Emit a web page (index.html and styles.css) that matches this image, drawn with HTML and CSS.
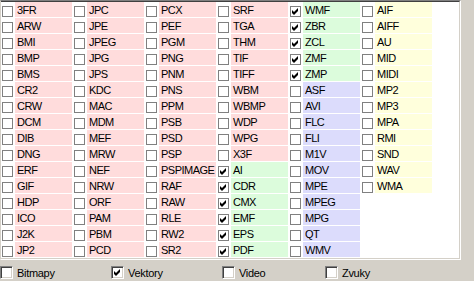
FILE: index.html
```html
<!DOCTYPE html>
<html lang="cs">
<head>
    <meta charset="UTF-8">
    <title>Typy souborů</title>
    <link rel="stylesheet" href="styles.css">
</head>
<body>
    <div class="list">
        <div class="list-inner">
            <div class="items">
                <div class="item pink"><span class="box"></span><span class="name">3FR</span></div>
                <div class="item pink"><span class="box"></span><span class="name">ARW</span></div>
                <div class="item pink"><span class="box"></span><span class="name">BMI</span></div>
                <div class="item pink"><span class="box"></span><span class="name">BMP</span></div>
                <div class="item pink"><span class="box"></span><span class="name">BMS</span></div>
                <div class="item pink"><span class="box"></span><span class="name">CR2</span></div>
                <div class="item pink"><span class="box"></span><span class="name">CRW</span></div>
                <div class="item pink"><span class="box"></span><span class="name">DCM</span></div>
                <div class="item pink"><span class="box"></span><span class="name">DIB</span></div>
                <div class="item pink"><span class="box"></span><span class="name">DNG</span></div>
                <div class="item pink"><span class="box"></span><span class="name">ERF</span></div>
                <div class="item pink"><span class="box"></span><span class="name">GIF</span></div>
                <div class="item pink"><span class="box"></span><span class="name">HDP</span></div>
                <div class="item pink"><span class="box"></span><span class="name">ICO</span></div>
                <div class="item pink"><span class="box"></span><span class="name">J2K</span></div>
                <div class="item pink"><span class="box"></span><span class="name">JP2</span></div>

                <div class="item pink"><span class="box"></span><span class="name">JPC</span></div>
                <div class="item pink"><span class="box"></span><span class="name">JPE</span></div>
                <div class="item pink"><span class="box"></span><span class="name">JPEG</span></div>
                <div class="item pink"><span class="box"></span><span class="name">JPG</span></div>
                <div class="item pink"><span class="box"></span><span class="name">JPS</span></div>
                <div class="item pink"><span class="box"></span><span class="name">KDC</span></div>
                <div class="item pink"><span class="box"></span><span class="name">MAC</span></div>
                <div class="item pink"><span class="box"></span><span class="name">MDM</span></div>
                <div class="item pink"><span class="box"></span><span class="name">MEF</span></div>
                <div class="item pink"><span class="box"></span><span class="name">MRW</span></div>
                <div class="item pink"><span class="box"></span><span class="name">NEF</span></div>
                <div class="item pink"><span class="box"></span><span class="name">NRW</span></div>
                <div class="item pink"><span class="box"></span><span class="name">ORF</span></div>
                <div class="item pink"><span class="box"></span><span class="name">PAM</span></div>
                <div class="item pink"><span class="box"></span><span class="name">PBM</span></div>
                <div class="item pink"><span class="box"></span><span class="name">PCD</span></div>

                <div class="item pink"><span class="box"></span><span class="name">PCX</span></div>
                <div class="item pink"><span class="box"></span><span class="name">PEF</span></div>
                <div class="item pink"><span class="box"></span><span class="name">PGM</span></div>
                <div class="item pink"><span class="box"></span><span class="name">PNG</span></div>
                <div class="item pink"><span class="box"></span><span class="name">PNM</span></div>
                <div class="item pink"><span class="box"></span><span class="name">PNS</span></div>
                <div class="item pink"><span class="box"></span><span class="name">PPM</span></div>
                <div class="item pink"><span class="box"></span><span class="name">PSB</span></div>
                <div class="item pink"><span class="box"></span><span class="name">PSD</span></div>
                <div class="item pink"><span class="box"></span><span class="name">PSP</span></div>
                <div class="item pink"><span class="box"></span><span class="name">PSPIMAGE</span></div>
                <div class="item pink"><span class="box"></span><span class="name">RAF</span></div>
                <div class="item pink"><span class="box"></span><span class="name">RAW</span></div>
                <div class="item pink"><span class="box"></span><span class="name">RLE</span></div>
                <div class="item pink"><span class="box"></span><span class="name">RW2</span></div>
                <div class="item pink"><span class="box"></span><span class="name">SR2</span></div>

                <div class="item pink"><span class="box"></span><span class="name">SRF</span></div>
                <div class="item pink"><span class="box"></span><span class="name">TGA</span></div>
                <div class="item pink"><span class="box"></span><span class="name">THM</span></div>
                <div class="item pink"><span class="box"></span><span class="name">TIF</span></div>
                <div class="item pink"><span class="box"></span><span class="name">TIFF</span></div>
                <div class="item pink"><span class="box"></span><span class="name">WBM</span></div>
                <div class="item pink"><span class="box"></span><span class="name">WBMP</span></div>
                <div class="item pink"><span class="box"></span><span class="name">WDP</span></div>
                <div class="item pink"><span class="box"></span><span class="name">WPG</span></div>
                <div class="item pink"><span class="box"></span><span class="name">X3F</span></div>
                <div class="item green"><span class="box"><svg class="tick" viewBox="0 0 7 7"><polygon points="0,2 2,4 6,0 6,3 2,7 0,5"/></svg></span><span class="name">AI</span></div>
                <div class="item green"><span class="box"><svg class="tick" viewBox="0 0 7 7"><polygon points="0,2 2,4 6,0 6,3 2,7 0,5"/></svg></span><span class="name">CDR</span></div>
                <div class="item green"><span class="box"><svg class="tick" viewBox="0 0 7 7"><polygon points="0,2 2,4 6,0 6,3 2,7 0,5"/></svg></span><span class="name">CMX</span></div>
                <div class="item green"><span class="box"><svg class="tick" viewBox="0 0 7 7"><polygon points="0,2 2,4 6,0 6,3 2,7 0,5"/></svg></span><span class="name">EMF</span></div>
                <div class="item green"><span class="box"><svg class="tick" viewBox="0 0 7 7"><polygon points="0,2 2,4 6,0 6,3 2,7 0,5"/></svg></span><span class="name">EPS</span></div>
                <div class="item green"><span class="box"><svg class="tick" viewBox="0 0 7 7"><polygon points="0,2 2,4 6,0 6,3 2,7 0,5"/></svg></span><span class="name">PDF</span></div>

                <div class="item green"><span class="box"><svg class="tick" viewBox="0 0 7 7"><polygon points="0,2 2,4 6,0 6,3 2,7 0,5"/></svg></span><span class="name">WMF</span></div>
                <div class="item green"><span class="box"><svg class="tick" viewBox="0 0 7 7"><polygon points="0,2 2,4 6,0 6,3 2,7 0,5"/></svg></span><span class="name">ZBR</span></div>
                <div class="item green"><span class="box"><svg class="tick" viewBox="0 0 7 7"><polygon points="0,2 2,4 6,0 6,3 2,7 0,5"/></svg></span><span class="name">ZCL</span></div>
                <div class="item green"><span class="box"><svg class="tick" viewBox="0 0 7 7"><polygon points="0,2 2,4 6,0 6,3 2,7 0,5"/></svg></span><span class="name">ZMF</span></div>
                <div class="item green"><span class="box"><svg class="tick" viewBox="0 0 7 7"><polygon points="0,2 2,4 6,0 6,3 2,7 0,5"/></svg></span><span class="name">ZMP</span></div>
                <div class="item blue"><span class="box"></span><span class="name">ASF</span></div>
                <div class="item blue"><span class="box"></span><span class="name">AVI</span></div>
                <div class="item blue"><span class="box"></span><span class="name">FLC</span></div>
                <div class="item blue"><span class="box"></span><span class="name">FLI</span></div>
                <div class="item blue"><span class="box"></span><span class="name">M1V</span></div>
                <div class="item blue"><span class="box"></span><span class="name">MOV</span></div>
                <div class="item blue"><span class="box"></span><span class="name">MPE</span></div>
                <div class="item blue"><span class="box"></span><span class="name">MPEG</span></div>
                <div class="item blue"><span class="box"></span><span class="name">MPG</span></div>
                <div class="item blue"><span class="box"></span><span class="name">QT</span></div>
                <div class="item blue"><span class="box"></span><span class="name">WMV</span></div>

                <div class="item yellow"><span class="box"></span><span class="name">AIF</span></div>
                <div class="item yellow"><span class="box"></span><span class="name">AIFF</span></div>
                <div class="item yellow"><span class="box"></span><span class="name">AU</span></div>
                <div class="item yellow"><span class="box"></span><span class="name">MID</span></div>
                <div class="item yellow"><span class="box"></span><span class="name">MIDI</span></div>
                <div class="item yellow"><span class="box"></span><span class="name">MP2</span></div>
                <div class="item yellow"><span class="box"></span><span class="name">MP3</span></div>
                <div class="item yellow"><span class="box"></span><span class="name">MPA</span></div>
                <div class="item yellow"><span class="box"></span><span class="name">RMI</span></div>
                <div class="item yellow"><span class="box"></span><span class="name">SND</span></div>
                <div class="item yellow"><span class="box"></span><span class="name">WAV</span></div>
                <div class="item yellow"><span class="box"></span><span class="name">WMA</span></div>
            </div>
        </div>
    </div>

    <!-- skupiny -->
    <div class="groups">
        <label class="opt"><span class="box3d"></span>Bitmapy</label>
        <label class="opt"><span class="box3d"><svg class="tick" viewBox="0 0 7 7"><polygon points="0,2 2,4 6,0 6,3 2,7 0,5"/></svg></span>Vektory</label>
        <label class="opt opt-short"><span class="box3d"></span>Video</label>
        <label class="opt"><span class="box3d"></span>Zvuky</label>
    </div>
</body>
</html>
```

FILE: styles.css
```css
body {
    margin: 0;
    background-color: #d4d0c8;
    font-family: "Liberation Sans", Arial, sans-serif;
    font-size: 11px;
    color: #000;
}

/* seznam */
.list {
    width: 461px;
    height: 260px;
    box-sizing: border-box;
    border-top: 1px solid #808080;
    border-left: 1px solid #d4d0c8;
    border-right: 1px solid #ffffff;
    border-bottom: 1px solid #ffffff;
}

.list-inner {
    height: 100%;
    box-sizing: border-box;
    background: #ffffff;
    border-top: 1px solid #404040;
    border-right: 1px solid #d4d0c8;
    border-bottom: 1px solid #d4d0c8;
}

.items {
    display: grid;
    grid-template-rows: repeat(16, 16px);
    grid-auto-flow: column;
    grid-auto-columns: 72px;
}

.item {
    display: flex;
    align-items: flex-start;
}

.box {
    flex: none;
    width: 11px;
    height: 11px;
    margin: 4px 0 0 1px;
    box-sizing: border-box;
    border: 1px solid #808080;
    background: #ffffff;
    display: flex;
    align-items: center;
    justify-content: center;
}

.tick {
    width: 7px;
    height: 7px;
    fill: #000;
}

.name {
    width: 57px;
    height: 15px;
    margin-left: 2px;
    padding-left: 2px;
    box-sizing: border-box;
    line-height: 16px;
    white-space: nowrap;
    overflow: hidden;
    letter-spacing: -0.5px;
}

.pink .name { background: #ffdcdc; }
.green .name { background: #dcfcdc; }
.blue .name { background: #dcdcfc; }
.yellow .name { background: #ffffdc; }

/* spodni volby */
.groups {
    display: flex;
    height: 21px;
    padding-top: 6px;
    box-sizing: border-box;
}

.opt {
    width: 111px;
    display: flex;
    align-items: flex-start;
    line-height: 14px;
    letter-spacing: -0.3px;
}

.opt-short {
    width: 103px;
}

.box3d {
    width: 13px;
    height: 13px;
    margin-right: 4px;
    box-sizing: border-box;
    background: #ffffff;
    border: 1px solid;
    border-color: #808080 #ffffff #ffffff #808080;
    box-shadow: inset 1px 1px #404040, inset -1px -1px #d4d0c8;
    display: flex;
    align-items: center;
    justify-content: center;
}
```
